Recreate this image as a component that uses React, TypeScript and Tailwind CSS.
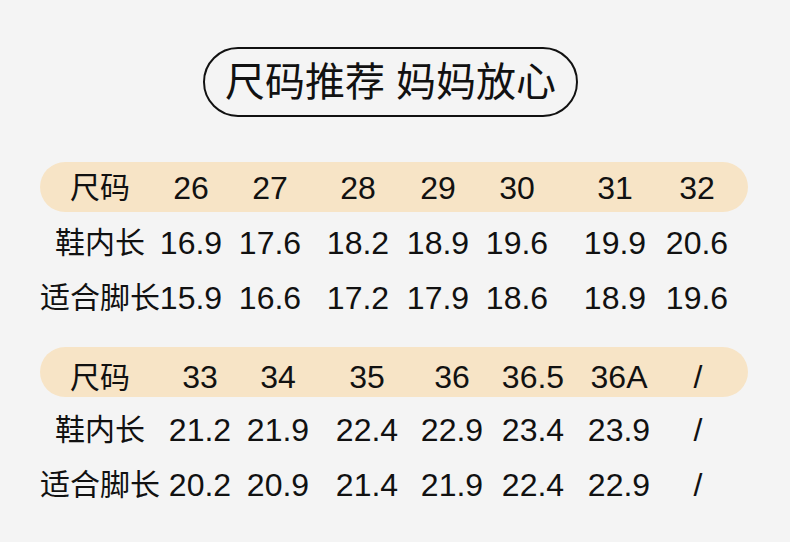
import React from "react";

const font = { fontFamily: '"Liberation Sans", "Noto Sans CJK SC", sans-serif' };

type Row = { label: string; vals: string[] };

function Table({
  widths,
  rows,
  bandTop,
  bandPad,
  rowGap,
}: {
  widths: string;
  rows: Row[];
  bandTop: string;
  bandPad: string;
  rowGap: string;
}) {
  return (
    <div className={`${bandTop} ml-[40px] w-[708px]`}>
      {rows.map((r, i) => (
        <div
          key={i}
          className={
            i === 0
              ? `grid ${widths} h-[50px] items-center rounded-full bg-[#f7e4c6] ${bandPad}`
              : `grid ${widths} h-[55px] items-center ${i === 1 ? rowGap : ""}`
          }
        >
          <div className="flex justify-center whitespace-nowrap text-[30px]">{r.label}</div>
          {r.vals.map((v, j) => (
            <div key={j} className="flex justify-center whitespace-nowrap text-[32px]">
              {v}
            </div>
          ))}
        </div>
      ))}
    </div>
  );
}

export default function App() {
  const t1: Row[] = [
    { label: "尺码", vals: ["26", "27", "28", "29", "30", "31", "32"] },
    { label: "鞋内长", vals: ["16.9", "17.6", "18.2", "18.9", "19.6", "19.9", "20.6"] },
    { label: "适合脚长", vals: ["15.9", "16.6", "17.2", "17.9", "18.6", "18.9", "19.6"] },
  ];
  const t2: Row[] = [
    { label: "尺码", vals: ["33", "34", "35", "36", "36.5", "36A", "/"] },
    { label: "鞋内长", vals: ["21.2", "21.9", "22.4", "22.9", "23.4", "23.9", "/"] },
    { label: "适合脚长", vals: ["20.2", "20.9", "21.4", "21.9", "22.4", "22.9", "/"] },
  ];
  return (
    <div className="w-[790px] h-[542px] overflow-hidden bg-[#f4f4f4] text-[#111111] pt-[47px]" style={font}>
      <div className="ml-[203px] w-[375px] h-[70px] rounded-full border-[2.5px] border-[#111111] flex items-center justify-center text-[40px] font-normal whitespace-nowrap">
        尺码推荐 妈妈放心
      </div>
      <Table
        bandTop="mt-[45px]"
        bandPad="pt-[1px]"
        rowGap="mt-[3px]"
        widths="grid-cols-[120px_62px_96px_80px_80px_78px_118px_46px]"
        rows={t1}
      />
      <Table
        bandTop="mt-[22px]"
        bandPad="pt-[6px]"
        rowGap="mt-[5px]"
        widths="grid-cols-[120px_80px_76px_102px_68px_94px_78px_80px]"
        rows={t2}
      />
    </div>
  );
}
